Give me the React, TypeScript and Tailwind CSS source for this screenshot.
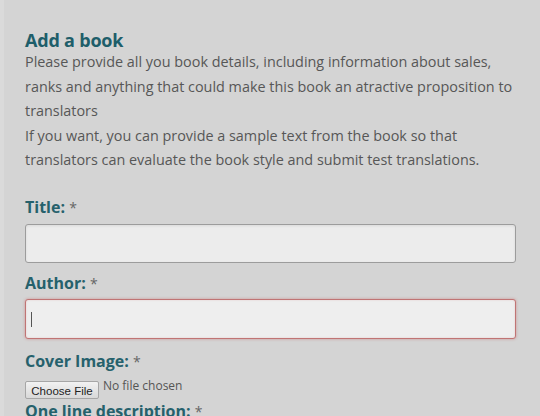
export default function App() {
  const font = { fontFamily: '"Open Sans", "Liberation Sans", sans-serif' }

  return (
    <div
      className="min-h-screen bg-[#d4d4d4] border-l-4 border-[#dadada] pl-[21px] pr-[24px] pt-[31px] overflow-hidden"
      style={font}
    >
      <h2 className="text-[18px] leading-[19px] font-bold text-[#1e5e6a] tracking-[-0.2px]">Add a book</h2>
      <p className="text-[14.4px] leading-[24.5px] text-[#575757] whitespace-nowrap">
        <span className="block">Please provide all you book details, including information about sales,</span>
        <span className="block">ranks and anything that could make this book an atractive proposition to</span>
        <span className="block">translators</span>
        <span className="block">If you want, you can provide a sample text from the book so that</span>
        <span className="block">translators can evaluate the book style and submit test translations.</span>
      </p>

      <label className="block mt-[23.5px] text-[16px] leading-[22px] font-bold text-[#26616c]">
        Title: <span className="font-normal text-[14px] text-[#666]">*</span>
      </label>
      <div className="mt-[4.5px] h-[39px] rounded-[3px] border border-[#9c9c9c] bg-[#ececec] shadow-[inset_0_1px_3px_rgba(0,0,0,0.08)]" />

      <label className="block mt-[9.5px] text-[16px] leading-[22px] font-bold text-[#26616c]">
        Author: <span className="font-normal text-[14px] text-[#666]">*</span>
      </label>
      <div className="mt-[4px] h-[40px] rounded-[3px] border border-[#c07474] bg-[#eeeeee] shadow-[0_0_3px_rgba(200,70,70,0.45),inset_0_0_2px_rgba(200,90,90,0.25)] flex items-center pl-[5px]">
        <span className="w-px h-[15px] bg-[#555]" />
      </div>

      <label className="block mt-[11px] text-[16px] leading-[22px] font-bold text-[#26616c]">
        Cover Image: <span className="font-normal text-[14px] text-[#666]">*</span>
      </label>
      <div className="mt-[8px] flex items-start gap-[4px] h-[18px]">
        <button
          className="h-[18px] w-[74px] rounded-[2px] border border-[#a6a6a6] bg-gradient-to-b from-[#f2f2f2] to-[#d8d8d8] text-[11.5px] leading-[16px] text-[#222] pt-[1px]"
          style={{ fontFamily: '"Liberation Sans", Arial, sans-serif' }}
        >
          Choose File
        </button>
        <span className="text-[12px] leading-[12px] text-[#555] -mt-[1px]">No file chosen</span>
      </div>

      <label className="block mt-[1px] text-[16px] leading-[22px] font-bold text-[#26616c]">
        One line description: <span className="font-normal text-[14px] text-[#666]">*</span>
      </label>
    </div>
  )
}
